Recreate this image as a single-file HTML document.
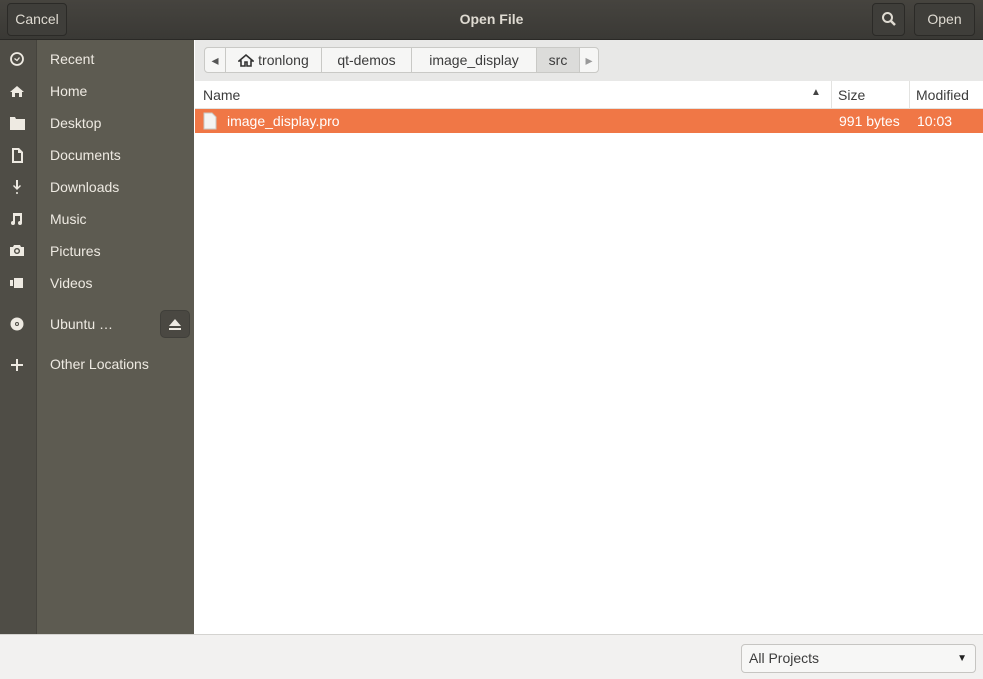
<!DOCTYPE html>
<html><head><meta charset="utf-8"><style>
*{margin:0;padding:0;box-sizing:border-box}
body{width:983px;height:679px;overflow:hidden;font-family:"Liberation Sans",sans-serif;font-size:14px;position:relative;background:#fff}
.abs{position:absolute}
#hdr{left:0;top:0;width:983px;height:40px;background:linear-gradient(#46443f,#3a3935);border-bottom:1px solid #2a2926}
.btn{position:absolute;top:3px;height:33px;border:1px solid #2b2a27;border-radius:4px;background:#3f3e3a;color:#dfdbd2;font-size:14px;line-height:31px;text-align:center}
#title{left:0;width:983px;top:11px;text-align:center;color:#dfdbd2;font-weight:bold;font-size:14px}
#ic{left:0;top:40px;width:37px;height:594px;background:#4f4d46;border-right:1px solid #45433d}
#lab{left:37px;top:40px;width:157px;height:594px;background:#5d5b51}
.it{position:absolute;left:50px;color:#eeeae2;font-size:14px}
.i{position:absolute;left:8px;width:20px;height:20px}
#pb{left:195px;top:40px;width:788px;height:41px;background:#e8e8e7}
.crumb{position:absolute;top:7px;height:26px;border:1px solid #c9c9c6;background:#f6f6f5;line-height:24px;color:#3c3c3c;font-size:14px;text-align:center}
#cols{left:195px;top:81px;width:788px;height:28px;background:#fff;border-bottom:1px solid #e3e3e1;color:#3c3c3c}
#sel{left:195px;top:109px;width:788px;height:24px;background:#f07746;color:#fff}
#bot{left:0;top:634px;width:983px;height:45px;background:#f2f1f0;border-top:1px solid #d4d3d0}
</style></head><body>
<div id="hdr" class="abs">
<div class="btn" style="left:7px;width:60px">Cancel</div>
<div id="title" class="abs">Open File</div>
<div class="btn" style="left:872px;width:33px"><svg width="18" height="18" viewBox="0 0 18 18" style="margin-top:6px"><circle cx="7.5" cy="7.5" r="4.5" fill="none" stroke="#dfdbd2" stroke-width="2"/><path d="M11 11l4 4" stroke="#dfdbd2" stroke-width="2.5"/></svg></div>
<div class="btn" style="left:914px;width:61px">Open</div>
</div>
<div id="ic" class="abs"></div>
<div id="lab" class="abs"></div>
<svg class="abs" style="left:0;top:40px" width="37" height="340" viewBox="0 40 37 340" fill="#eeeae2">
<circle cx="17" cy="59" r="6" fill="none" stroke="#eeeae2" stroke-width="1.8"/><path d="M14.5 58.5l2.5 2 2.5-3" stroke="#eeeae2" stroke-width="1.3" fill="none"/>
<path d="M10 92l7-6 7 6h-2v5h-3v-4h-4v4h-3v-5z"/>
<path d="M10 117h5l1 2h9v11h-15z"/>
<path d="M12 148h7l4 4v11h-11zM14 150v11h7v-8h-3v-3z" fill-rule="evenodd"/>
<path d="M16 180h2v7l2-2 1 1-4 4-4-4 1-1 2 2z"/><circle cx="17" cy="193" r="1"/>
<path d="M13 213h9v10a2 2 0 1 1-2-2v-5h-5v7a2 2 0 1 1-2-2z"/>
<path d="M10 247h3l1-2h6l1 2h3v9h-14zM17 248a3 3 0 1 0 .01 0z" fill-rule="evenodd"/><circle cx="17" cy="251" r="1.6"/>
<path d="M10 280h3v6h-3zM14 278h9v10h-9z"/>
<circle cx="17" cy="324" r="6.5"/><circle cx="17" cy="324" r="2" fill="#4f4d46"/><circle cx="17" cy="324" r="1" />
<path d="M16 359h2v5h5v2h-5v5h-2v-5h-5v-2h5z"/>
</svg>
<div class="it" style="top:51px">Recent</div>
<div class="it" style="top:83px">Home</div>
<div class="it" style="top:115px">Desktop</div>
<div class="it" style="top:147px">Documents</div>
<div class="it" style="top:179px">Downloads</div>
<div class="it" style="top:211px">Music</div>
<div class="it" style="top:243px">Pictures</div>
<div class="it" style="top:275px">Videos</div>
<div class="it" style="top:316px">Ubuntu …</div>
<div class="abs" style="left:160px;top:310px;width:30px;height:28px;border-radius:5px;background:#4a4842;border:1px solid #403f3a"><svg width="28" height="26"><path d="M8 15l6-7 6 7z M8 17h12v2h-12z" fill="#eeeae2"/></svg></div>
<div class="it" style="top:356px">Other Locations</div>
<div id="pb" class="abs">
<div class="crumb" style="left:9px;width:22px;border-radius:4px 0 0 4px;color:#555">◂</div>
<div class="crumb" style="left:30px;width:97px"><svg width="16" height="14" style="vertical-align:-2px"><path d="M1 8l7-6 7 6h-2v5h-4v-4h-2v4h-4v-5z" fill="none" stroke="#333" stroke-width="1.6"/></svg> tronlong</div>
<div class="crumb" style="left:126px;width:91px">qt-demos</div>
<div class="crumb" style="left:216px;width:126px">image_display</div>
<div class="crumb" style="left:341px;width:44px;background:#dcdcda">src</div>
<div class="crumb" style="left:384px;width:20px;border-radius:0 4px 4px 0;color:#999">▸</div>
</div>
<div id="cols" class="abs">
<div class="abs" style="left:8px;top:6px">Name</div>
<div class="abs" style="left:616px;top:6px;font-size:10px;color:#444">▲</div>
<div class="abs" style="left:636px;top:0;height:28px;border-left:1px solid #e3e3e1"></div>
<div class="abs" style="left:643px;top:6px">Size</div>
<div class="abs" style="left:714px;top:0;height:28px;border-left:1px solid #e3e3e1"></div>
<div class="abs" style="left:721px;top:6px">Modified</div>
</div>
<div id="sel" class="abs">
<svg class="abs" style="left:8px;top:3px" width="14" height="18"><path d="M1 1h8l4 4v12h-12z" fill="#f4f4f2" stroke="#c8c8c4"/></svg>
<div class="abs" style="left:32px;top:4px">image_display.pro</div>
<div class="abs" style="left:644px;top:4px">991 bytes</div>
<div class="abs" style="left:722px;top:4px">10:03</div>
</div>
<div id="bot" class="abs">
<div class="abs" style="left:741px;top:9px;width:235px;height:29px;border:1px solid #c6c5c2;border-radius:4px;background:#f7f7f6;color:#3c3c3c;line-height:27px;padding-left:7px">All Projects<span style="position:absolute;right:8px;font-size:10px;color:#222">▼</span></div>
</div>
</body></html>
